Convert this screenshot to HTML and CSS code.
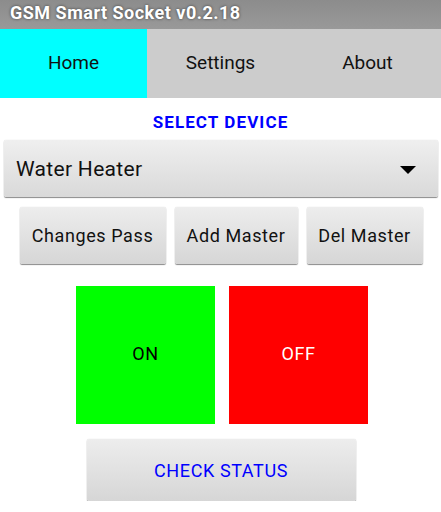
FILE: index.html
```html
<!DOCTYPE html>
<html lang="en">
<head>
  <meta charset="UTF-8" />
  <meta name="viewport" content="width=device-width, initial-scale=1.0"/>
  <title>GSM Smart Socket</title>
  <link rel="stylesheet" href="styles.css">
</head>
<body>
  <header class="titlebar">GSM Smart Socket v0.2.18</header>

  <nav class="tabs">
    <div class="tab active">Home</div>
    <div class="tab">Settings</div>
    <div class="tab">About</div>
  </nav>

  <main class="home">
    <h2 class="label">SELECT DEVICE</h2>

    <div class="spinner">
      <span>Water Heater</span>
      <span class="arrow"></span>
    </div>

    <div class="btn-row">
      <button class="btn w1">Changes Pass</button>
      <button class="btn w2">Add Master</button>
      <button class="btn w3">Del Master</button>
    </div>

    <div class="switches">
      <div class="switch on">ON</div>
      <div class="switch off">OFF</div>
    </div>

    <button class="btn check">CHECK STATUS</button>
  </main>
</body>
</html>
```

FILE: styles.css
```css
* {
  box-sizing: border-box;
  margin: 0;
  padding: 0;
}

body {
  font-family: Roboto, 'Noto Sans', sans-serif;
  background: #fff;
  color: #000;
  width: 441px;
}

.titlebar {
  height: 29px;
  padding-left: 10px;
  line-height: 26px;
  font-size: 18px;
  font-weight: bold;
  letter-spacing: 0.5px;
  color: #fff;
  text-shadow: 0 0 3px rgba(0, 0, 0, 0.6);
  background: linear-gradient(to bottom, #8c8c8c, #999);
}

.tabs {
  display: grid;
  grid-template-columns: 147px 147px 147px;
  height: 69px;
  background: #cccccc;
}

.tab {
  display: flex;
  align-items: center;
  justify-content: center;
  padding-bottom: 2px;
  font-size: 19px;
  color: #111;
}

.tab.active {
  background: #00ffff;
}

.home {
  display: flex;
  flex-direction: column;
  align-items: center;
}

.label {
  height: 42px;
  padding-top: 14px;
  font-size: 17px;
  font-weight: bold;
  letter-spacing: 1.1px;
  color: #0000ff;
  text-align: center;
}

.spinner {
  align-self: stretch;
  margin: 0 3px 0 4px;
  height: 57px;
  display: flex;
  align-items: center;
  justify-content: space-between;
  padding: 0 22px 0 12px;
  font-size: 21px;
  letter-spacing: 0.3px;
  color: #111;
  background: linear-gradient(to bottom, #efefef, #d9d9d9);
  border-radius: 2px;
  box-shadow: 0 1px 1px rgba(0, 0, 0, 0.45), 0 0 1px rgba(0, 0, 0, 0.2);
}

.arrow {
  width: 0;
  height: 0;
  border-left: 8px solid transparent;
  border-right: 8px solid transparent;
  border-top: 8px solid #000;
  margin-top: 2px;
}

.btn {
  font-family: inherit;
  border: none;
  border-radius: 2px;
  background: linear-gradient(to bottom, #ededed, #d6d6d6);
  box-shadow: 0 1px 1px rgba(0, 0, 0, 0.45), 0 0 1px rgba(0, 0, 0, 0.2);
  cursor: pointer;
  font-size: 18px;
  letter-spacing: 0.6px;
}

.btn-row {
  display: flex;
  gap: 9px;
  margin-top: 10px;
  margin-left: 1px;
}

.btn-row .btn {
  height: 57px;
  color: #111;
}

.w1 { width: 146px; }
.w2 { width: 123px; }
.w3 { width: 116px; }

.switches {
  display: flex;
  gap: 14px;
  margin-top: 22px;
  margin-left: 3px;
}

.switch {
  width: 139px;
  height: 138px;
  display: flex;
  align-items: center;
  justify-content: center;
  padding-bottom: 4px;
  font-size: 18px;
  letter-spacing: 0.6px;
}

.switch.on {
  background: #00ff00;
  color: #000;
}

.switch.off {
  background: #ff0000;
  color: #fff;
}

.check {
  width: 269px;
  height: 62px;
  margin-top: 15px;
  margin-left: 1px;
  color: #0000ff;
}
```
